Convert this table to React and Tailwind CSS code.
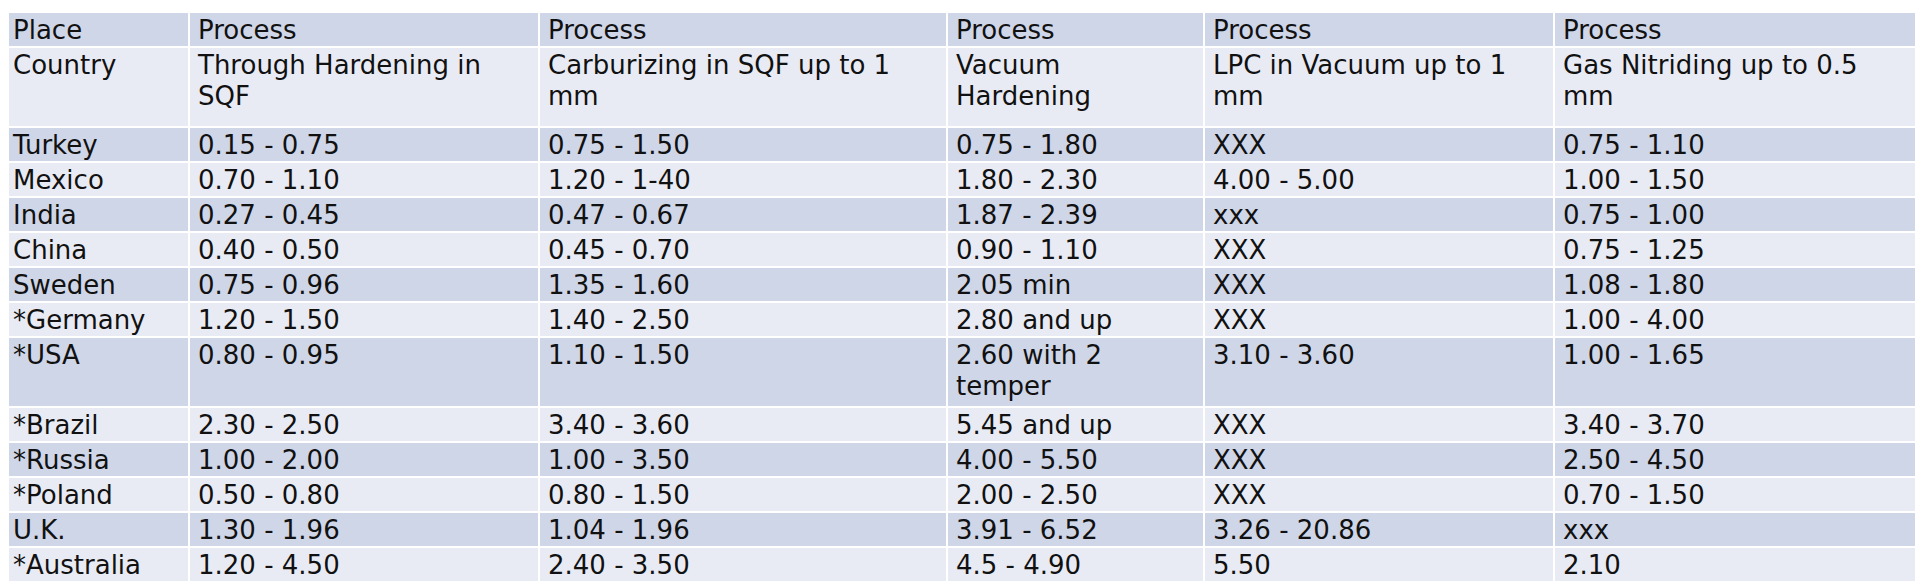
import React from 'react';

const rows = [
  ['Turkey', '0.15 - 0.75', '0.75 - 1.50', '0.75 - 1.80', 'XXX', '0.75 - 1.10'],
  ['Mexico', '0.70 - 1.10', '1.20 - 1-40', '1.80 - 2.30', '4.00 - 5.00', '1.00 - 1.50'],
  ['India', '0.27 - 0.45', '0.47 - 0.67', '1.87 - 2.39', 'xxx', '0.75 - 1.00'],
  ['China', '0.40 - 0.50', '0.45 - 0.70', '0.90 - 1.10', 'XXX', '0.75 - 1.25'],
  ['Sweden', '0.75 - 0.96', '1.35 - 1.60', '2.05 min', 'XXX', '1.08 - 1.80'],
  ['*Germany', '1.20 - 1.50', '1.40 - 2.50', '2.80 and up', 'XXX', '1.00 - 4.00'],
  ['*USA', '0.80 - 0.95', '1.10 - 1.50', ['2.60 with 2', 'temper'], '3.10 - 3.60', '1.00 - 1.65'],
  ['*Brazil', '2.30 - 2.50', '3.40 - 3.60', '5.45 and up', 'XXX', '3.40 - 3.70'],
  ['*Russia', '1.00 - 2.00', '1.00 - 3.50', '4.00 - 5.50', 'XXX', '2.50 - 4.50'],
  ['*Poland', '0.50 - 0.80', '0.80 - 1.50', '2.00 - 2.50', 'XXX', '0.70 - 1.50'],
  ['U.K.', '1.30 - 1.96', '1.04 - 1.96', '3.91 - 6.52', '3.26 - 20.86', 'xxx'],
  ['*Australia', '1.20 - 4.50', '2.40 - 3.50', '4.5 - 4.90', '5.50', '2.10'],
];

const subHeads = [
  ['Country'],
  ['Through Hardening in', 'SQF'],
  ['Carburizing in SQF up to 1', 'mm'],
  ['Vacuum', 'Hardening'],
  ['LPC in Vacuum up to 1', 'mm'],
  ['Gas Nitriding up to 0.5', 'mm'],
];

const Cell = ({ value, first }) => {
  const lines = Array.isArray(value) ? value : [value];
  return (
    <td
      className={`border-2 border-white align-top pt-[2px] whitespace-nowrap ${first ? 'pl-[4px]' : 'pl-[8px]'}`}
    >
      {lines.map((l, i) => (
        <div key={i}>{l}</div>
      ))}
    </td>
  );
};

const App = () => {
  return (
    <div
      className="w-[1920px] h-[587px] bg-white pt-[11px] pl-[7px] text-[26px] leading-[31px] text-[#111111] overflow-hidden"
      style={{ fontFamily: '"DejaVu Sans", Verdana, sans-serif' }}
    >
      <table className="table-fixed border-collapse w-[1908px]">
        <colgroup>
          <col className="w-[181px]" />
          <col className="w-[350px]" />
          <col className="w-[408px]" />
          <col className="w-[257px]" />
          <col className="w-[350px]" />
          <col className="w-[362px]" />
        </colgroup>
        <tbody>
          <tr className="h-[33px] bg-[#cfd6e8]">
            {['Place', 'Process', 'Process', 'Process', 'Process', 'Process'].map((t, i) => (
              <Cell key={i} value={t} first={i === 0} />
            ))}
          </tr>
          <tr className="h-[80px] bg-[#e9ebf4]">
            {subHeads.map((t, i) => (
              <Cell key={i} value={t} first={i === 0} />
            ))}
          </tr>
          {rows.map((r, ri) => (
            <tr
              key={ri}
              className={`${Array.isArray(r[3]) ? 'h-[70px]' : 'h-[35px]'} ${ri % 2 === 0 ? 'bg-[#cfd6e8]' : 'bg-[#e9ebf4]'}`}
            >
              {r.map((v, i) => (
                <Cell key={i} value={v} first={i === 0} />
              ))}
            </tr>
          ))}
        </tbody>
      </table>
    </div>
  );
};

export default App;
